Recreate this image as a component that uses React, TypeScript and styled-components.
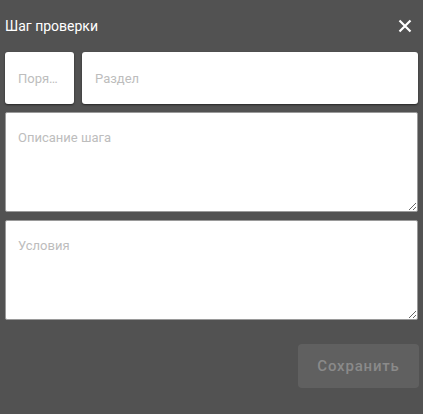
import React from "react";
import styled, { createGlobalStyle } from "styled-components";

const Global = createGlobalStyle`
  html, body {
    margin: 0;
    padding: 0;
    background: #525252;
  }
  body {
    font-family: Roboto, "Noto Sans", Arial, sans-serif;
  }
  * { box-sizing: border-box; }
`;

const Dialog = styled.div`
  width: 423px;
  height: 414px;
  background: #525252;
  padding: 0 5px 0 5px;
  display: flex;
  flex-direction: column;
`;

const Header = styled.div`
  height: 52px;
  display: flex;
  align-items: center;
  justify-content: space-between;
  padding-right: 6px;
`;

const Title = styled.h2`
  margin: 0;
  font-size: 14px;
  font-weight: 400;
  color: #ffffff;
  letter-spacing: 0;
`;

const CloseButton = styled.button`
  width: 14px;
  height: 14px;
  padding: 0;
  border: none;
  background: transparent;
  display: flex;
  align-items: center;
  justify-content: center;
  cursor: pointer;
`;

const Row = styled.div`
  display: flex;
  gap: 8px;
  margin-bottom: 8px;
`;

const TextInput = styled.input<{ $width?: number }>`
  height: 52px;
  ${(p) => (p.$width ? `width: ${p.$width}px;` : "flex: 1; min-width: 0;")}
  border: none;
  border-radius: 3px;
  background: #ffffff;
  box-shadow: 0 1px 2px rgba(0, 0, 0, 0.55);
  padding: 0 13px;
  font-family: Roboto, Arial, sans-serif;
  font-size: 13px;
  color: #333;
  outline: none;
  text-overflow: ellipsis;
  &::placeholder {
    color: #bdbdbd;
  }
`;

const TextArea = styled.textarea`
  display: block;
  width: 413px;
  height: 100px;
  margin: 0 0 8px 0;
  border: 1px solid #9a9a9a;
  border-radius: 2px;
  background: #ffffff;
  padding: 17px 12px;
  font-family: Roboto, Arial, sans-serif;
  font-size: 13px;
  line-height: 16px;
  color: #333;
  outline: none;
  &::placeholder {
    color: #bdbdbd;
  }
`;

const Footer = styled.div`
  display: flex;
  justify-content: flex-end;
  margin-top: 16px;
  padding-right: 0;
`;

const SaveButton = styled.button`
  width: 121px;
  height: 44px;
  margin-right: -1px;
  border: none;
  border-radius: 4px;
  background: #606060;
  color: #8a8a8a;
  font-family: Roboto, Arial, sans-serif;
  font-size: 15px;
  font-weight: 500;
  letter-spacing: 0.8px;
  cursor: default;
`;

export default function App() {
  return (
    <>
      <Global />
      <Dialog>
        <Header>
          <Title>Шаг проверки</Title>
          <CloseButton aria-label="Закрыть">
            <svg width="14" height="14" viewBox="0 0 14 14">
              <path
                d="M1.5 1.5 L12.5 12.5 M12.5 1.5 L1.5 12.5"
                stroke="#ffffff"
                strokeWidth="2.2"
                strokeLinecap="butt"
              />
            </svg>
          </CloseButton>
        </Header>
        <Row>
          <TextInput $width={69} placeholder="Поря…" />
          <TextInput placeholder="Раздел" />
        </Row>
        <TextArea placeholder="Описание шага" />
        <TextArea placeholder="Условия" />
        <Footer>
          <SaveButton disabled>Сохранить</SaveButton>
        </Footer>
      </Dialog>
    </>
  );
}
